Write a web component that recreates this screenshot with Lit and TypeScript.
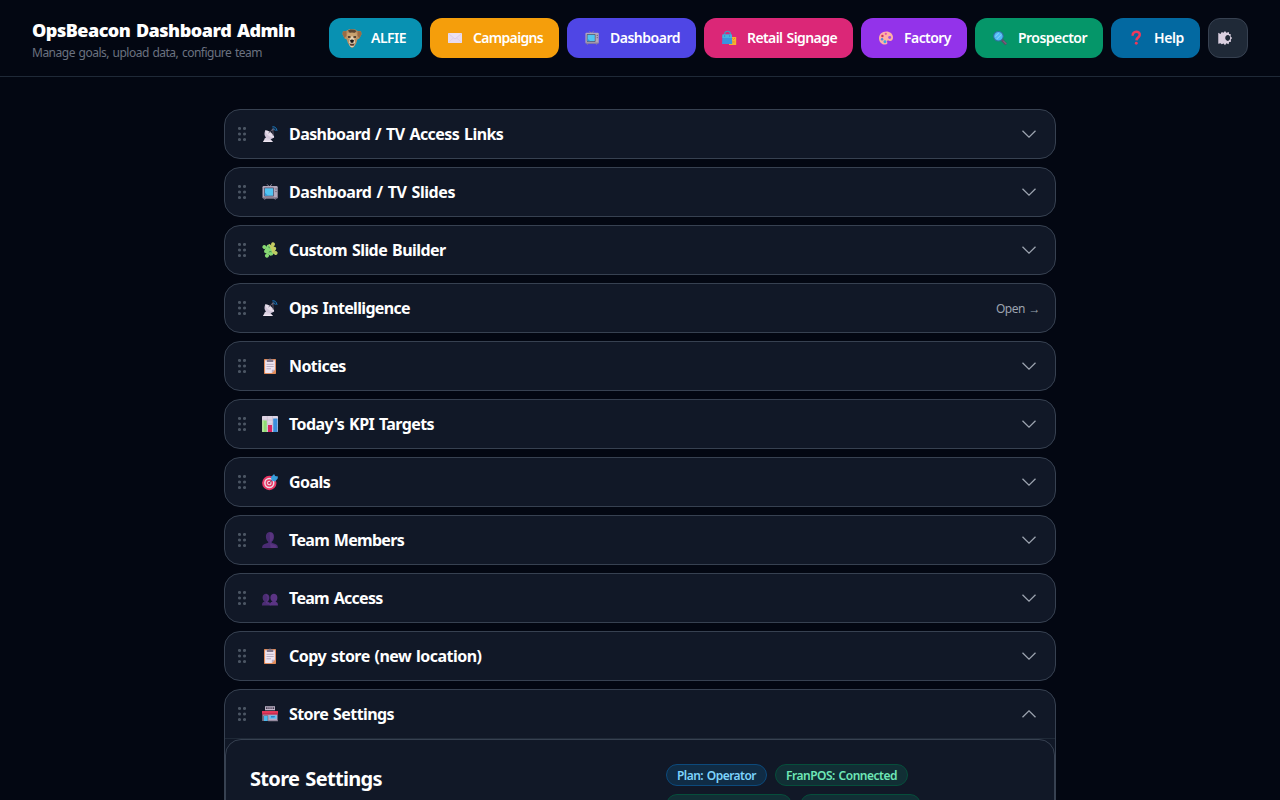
import { LitElement, html, css, svg } from "lit";
import { customElement, property, state } from "lit/decorators.js";
import { classMap } from "lit/directives/class-map.js";

const dish = svg`
  <path d="M1.200 16l1.500-3.600 3-2.400 3 3.200L10.800 16z" fill="#ddd3e3"/>
  <path d="M1.200 16l.5-1.200h8L10.800 16z" fill="#efe7f2"/>
  <path d="M3.400 4.300C1.600 8 2.600 11.300 5.600 12.600c2.400 1 5 .3 6.600-1.300z" fill="#d3c7db"/>
  <path d="M3.400 4.300C6.600 4 11.800 8 12.200 11.300 9.600 12.400 3.200 8.600 3.400 4.300z" fill="#e6ddea"/>
  <path d="M6.500 7l4.300-3.500.4 6.200" stroke="#6d6577" fill="none" stroke-width=".8"/>
  <circle cx="10.800" cy="3.500" r="1.100" fill="#6b6375"/>
  <path d="M10.300 .9q4-.7 4.700 4M11.300 2.600q1.700 0 2 2.200" stroke="#1a7ac2" fill="none" stroke-width="1"/>`;
const tv = svg`
  <path d="M5 .3l2.300 2.300L10 .3M3.500 14.300l-.9 1.400M12.500 14.300l.9 1.400" stroke="#8a8295" fill="none" stroke-width="1"/>
  <rect x=".5" y="2" width="15.200" height="12.400" rx="1.200" fill="#b3a8bb"/>
  <path d="M1 13.300h14.500v1H1z" fill="#827889"/>
  <rect x="2" y="3.500" width="10" height="9" rx=".8" fill="#5c5168"/>
  <rect x="2.800" y="4.300" width="8.400" height="7.400" fill="#52c4f2"/>
  <path d="M2.800 11.700V8.500L6 11.700z" fill="#3398d8"/>
  <circle cx="14" cy="5" r=".7" fill="#665d70"/><circle cx="14" cy="7.500" r=".7" fill="#665d70"/>`;
const clipboard = svg`
  <rect x="2" y="1" width="12" height="15" rx=".7" fill="#e18b59"/>
  <path d="M3.100 2.300h9.800v9.500l-3.100 3.200H3.100z" fill="#eee5f1"/>
  <path d="M9.800 15v-3.200h3.100z" fill="#bbaec6"/>
  <path d="M4.800 4V1.500h2q1.200-2 2.500 0h2V4z" fill="#81778b"/>
  <path d="M4.500 6.300h7.200M4.500 8.500h7.200M4.500 10.800h4.500" stroke="#b3a7bd" stroke-width=".9"/>`;
const icons: Record<string, unknown> = {
  dish,
  tv,
  clipboard,
  puzzle: svg`
    <g transform="rotate(28 8 8)">
      <path d="M3.200 3.200h9.600v9.600H3.200z" fill="#86d873"/>
      <path d="M3.200 3.200h9.600v7L7 5.500z" fill="#c5cc62"/>
      <circle cx="8" cy="1.600" r="2" fill="#c5cc62"/><circle cx="1.600" cy="8" r="2" fill="#86d873"/>
      <circle cx="8" cy="14.400" r="2" fill="#86d873"/><circle cx="14.400" cy="8" r="2" fill="#bccd65"/>
      <circle cx="2.400" cy="2.700" r="2" fill="#111827"/><circle cx="13.600" cy="2.700" r="1.300" fill="#111827"/>
      <circle cx="13.500" cy="13.400" r="1.900" fill="#111827"/><circle cx="2.600" cy="13.300" r="1.500" fill="#111827"/>
      <path d="M5.300 5.500l1.300 1.200M8 10.500q.3-1.700 2.300-1.500" stroke="#3f7d4d" stroke-width=".8" fill="none"/>
    </g>`,
  chart: svg`
    <rect x="0" y="0" width="16" height="16" rx=".8" fill="#dfd4e4"/>
    <path d="M0 4h16M0 8h16M0 12h16M5.300 0v16M10.500 0v16" stroke="#b8abc0" stroke-width=".4"/>
    <path d="M.5 4.500h4.300V16H.5z" fill="#8edb74"/><path d="M.5 4.500h1.400V16H.5z" fill="#b0e88f"/>
    <path d="M6 9h4v7H6z" fill="#dc2462"/><path d="M11.200 2.500h4.300V16h-4.300z" fill="#3b8edb"/>`,
  target: svg`
    <circle cx="7.300" cy="9" r="7.200" fill="#e93765"/><circle cx="7.300" cy="9" r="5.200" fill="#ead9e5"/>
    <circle cx="7.300" cy="9" r="3.700" fill="#e93765"/><circle cx="7.300" cy="9" r="2.300" fill="#eee0e9"/>
    <circle cx="7.300" cy="9" r="1.200" fill="#dd315e"/>
    <path d="M7.300 9l4.500-5" stroke="#53445d" stroke-width=".8"/>
    <path d="M9 3l3.100-3 1 2L16 2.500l-.4 2.300L13 7.500 9.500 6.600z" fill="#379edc"/>`,
  person: svg`
    <path d="M3.900 4.300C3.900-1.500 12.100-1.500 12.100 4.300c0 2.900-1 4.600-2.300 5.500v1l3.600 1.100c2 .7 2.500 1.900 2.500 4.100H.1c0-2.200.5-3.400 2.600-4.100l3.500-1.100v-1C4.900 8.900 3.900 7.200 3.900 4.300z" fill="#4a2c73"/>
    <path d="M7.500.5q4-.2 3.800 4.300-.3 4-2.700 4.700v2.300l4 1.200q2 .6 2.100 3H8.500z" fill="#59357f"/>`,
  people: svg`
    <g transform="translate(0 1.300)">
    <path d="M.6 6.100C.6 1.200 7.400 1.200 7.400 6.100c0 2.200-.8 3.300-1.700 4v.4c1.800.2 2.900 1.300 2.900 3.600H0c0-2.300.7-3.300 2.400-3.600v-.4C1.300 9.400.6 8.100.6 6.100z" fill="#4c2d74"/>
    <path d="M8.400 6.100c0-4.900 7-4.900 7 0 0 2.200-.7 3.300-1.700 4v.4c1.600.3 2.300 1.400 2.300 3.600H7.800c0-2.300.8-3.300 2.600-3.600v-.4C9.200 9.400 8.400 8.100 8.400 6.100z" fill="#5b3484"/>
    <path d="M4 3.500q2.300.2 2.200 3.300-.1 3-1.700 3.500v1.300q2.700 0 2.900 1.800" stroke="#5f3889" stroke-width=".9" fill="none"/>
    </g>`,
  store: svg`
    <path d="M3 .3h10v4H3z" fill="#c3b7cb"/><path d="M3.900 1.300h1.700v1.700H3.900zM6.300 1.300h1.300v1.700H6.300zM8.400 1.300h1.300v1.700H8.400zM10.500 1.300h1.700v1.700h-1.700z" fill="#4b4055"/>
    <path d="M.5 7.500h15V15H.5z" fill="#b8a8c0"/><path d="M0 5h16v3.300H0z" fill="#e33859"/>
    <path d="M0 7.500h16v1H0z" fill="#b21f46"/>
    <path d="M1.300 9.400H6.200V15H1.300z" fill="#5a5064"/><path d="M2 10H5.700V15H2z" fill="#48b8ec"/>
    <path d="M7.500 9.500h7v3.300h-7z" fill="#5cc0f3"/><path d="M9 10h4l-.6 1.500H9z" fill="#2a81c9"/>
    <path d="M6.200 14.200H16v1H6.200z" fill="#8b8095"/>`,
  dog: svg`
    <path d="M3.500 1.500L.3 2 0 4.500l1.800 3.600 1.600.6 1.200 3.300 2 3L8 16l1.600-.9 1.900-2.800 1-3.400 1.700-.8L16 4.500 15.600 2l-3.300-.5L10.400.3H5.500z" fill="#b98f62"/>
    <path d="M4.500 1.200L6.800.4l3.500.2 1.500 1.200-2.400 2H6.600z" fill="#5e4630"/>
    <path d="M3.300 1.700L.3 2.200 0 4.500l1.800 3.300L3.400 5.500zM12.700 1.700l3 .5.300 2.300-1.800 3.300-1.600-2.300z" fill="#9a6b44"/>
    <path d="M4 3.600L8 3l4 .6.200 3.600-2 1.700L8 7.100 5.800 8.900 3.800 7.200z" fill="#c9a370"/>
    <path d="M6.200 8.300L8 5.600l1.900 2.700.7 3.200-1 3.200L8 15.400l-1.700-.7-.9-3.200z" fill="#e3d0b2"/>
    <path d="M4.500 6h2.200v1.300H4.600zM9.300 6h2.200l-.1 1.300H9.300z" fill="#33251e"/>
    <path d="M6.300 9.500q1.700-1.300 3.400 0L9 11.500H7z" fill="#191719"/>
    <path d="M5.700 12q2.300.9 4.600 0l-.9 2.200H6.800z" fill="#5c3c2f"/>`,
  envelope: svg`
    <rect x="0" y="2.300" width="16" height="11.400" rx=".7" fill="#e8dcef"/>
    <path d="M.6 12.900l6-5.300M15.400 12.900l-6-5.300" stroke="#dccbe4" stroke-width=".8"/>
    <path d="M.5 2.800l7.500 6.400 7.500-6.400" stroke="#d3c0dd" stroke-width=".7" fill="#ebe1f1"/>`,
  bags: svg`
    <path d="M3.200 5V2.600C3.400-.5 9.300-.5 9.500 2.600V5" stroke="#3aa0c8" fill="none" stroke-width="1.300"/>
    <path d="M8.500 6.800h7.700V16H8z" fill="#f6b12f"/><path d="M11.800 8.300q1.300 3 3-.3M12 12.500h2.600" stroke="#d98a1e" stroke-width=".9" fill="none"/>
    <path d="M.6 3.900h10.600l.5 11H0z" fill="#3b93e0"/><path d="M.6 3.900h10.600l.2 4H.4z" fill="#45b4e0"/>
    <path d="M2.600 5.700h1M8.300 5.700h1" stroke="#1f6d9a" stroke-width="1"/>`,
  palette: svg`
    <path d="M8.500.5C3 .5 0 4 0 8.200s3 7.300 7 7.300c2.600 0 3-1.500 2.300-2.900-.6-1.500.8-2 2.200-1.500 2.500 1 4.500-.7 4.500-3.800C16 3 12.500.5 8.500.5z" fill="#ffb1a5"/>
    <circle cx="12.200" cy="7.500" r="1.700" fill="#a64ee4"/><circle cx="7.800" cy="3.200" r="1.300" fill="#e34cae"/>
    <circle cx="3.900" cy="5.600" r="1.400" fill="#ca345f"/><circle cx="3.500" cy="9.500" r="1.400" fill="#518ae1"/><circle cx="6.800" cy="12.400" r="1.700" fill="#3aaae4"/>`,
  glass: svg`
    <path d="M10 10l5 5.200" stroke="#5d4a66" stroke-width="3"/><path d="M11.500 11l3.700 3.800" stroke="#8b7491" stroke-width="1"/>
    <circle cx="6.200" cy="6" r="5.500" fill="#4fb9f5" stroke="#2f6f9c" stroke-width="1.200"/>
    <path d="M2.600 6.500l4-4M4.300 9.300L9.600 4" stroke="#7dd0fa" stroke-width="1.200"/>`,
  question: svg`
    <path d="M4.300 5.500C3.300-.3 12.900-.6 12.300 4.500c-.3 3-3.700 3-3.800 6.200" stroke="#ee385b" stroke-width="2.900" fill="none"/>
    <circle cx="8.300" cy="14" r="1.700" fill="#ee385b"/>`,
  gear: svg`
    <path fill-rule="evenodd" d="M.3 2l2.500 1.400L4.300 1l2 1L8 0l1.500 2 2.800-1 .4 2.300 2 .5-.4 2.400L16.200 8l-1.600 1.800.3 2.500-2.200.4-.6 2.300-2.500-1L8 16.200l-1.600-2-2.200.8-1.200-1L.3 14.600zM11.300 4.700c-4 0-4 6.600 0 6.600 3.500 0 3.500-6.600 0-6.600z" fill="#d9cfdf"/>`,
};

@customElement("emoji-icon")
class EmojiIcon extends LitElement {
  static styles = css`
    :host { display: block; width: 16px; height: 16px; flex: none; }
    svg { display: block; width: 100%; height: 100%; overflow: visible; }
  `;
  @property() name = "";
  render() {
    return html`<svg viewBox="0 0 16 16" aria-hidden="true">${icons[this.name]}</svg>`;
  }
}

/* One line of text, tracked so that it fills the given measure. */
@customElement("fit-text")
class FitText extends LitElement {
  static styles = css`
    :host { display: block; flex: none; }
    .line { display: inline-block; white-space: pre; vertical-align: top; word-spacing: 0.08em; }
  `;
  @property() text = "";
  @property({ type: Number }) measure = 0;
  render() {
    return html`<span class="line">${this.text}</span>`;
  }
  updated() {
    const line = this.renderRoot.querySelector(".line") as HTMLElement;
    line.style.letterSpacing = "0px";
    const natural = line.getBoundingClientRect().width;
    line.style.letterSpacing = `${(this.measure - natural) / this.text.length}px`;
    this.style.width = `${this.measure}px`;
  }
}

const links = [
  { label: "ALFIE", icon: "dog", w: 35, tone: "cyan" },
  { label: "Campaigns", icon: "envelope", w: 70, tone: "amber" },
  { label: "Dashboard", icon: "tv", w: 70, tone: "indigo" },
  { label: "Retail Signage", icon: "bags", w: 90, tone: "pink" },
  { label: "Factory", icon: "palette", w: 47, tone: "purple" },
  { label: "Prospector", icon: "glass", w: 69, tone: "green" },
  { label: "Help", icon: "question", w: 30, tone: "sky" },
];

const sections = [
  { label: "Dashboard / TV Access Links", icon: "dish", w: 214.3 },
  { label: "Dashboard / TV Slides", icon: "tv", w: 166 },
  { label: "Custom Slide Builder", icon: "puzzle", w: 156.7 },
  { label: "Ops Intelligence", icon: "dish", w: 121 },
  { label: "Notices", icon: "clipboard", w: 56.6 },
  { label: "Today's KPI Targets", icon: "chart", w: 145 },
  { label: "Goals", icon: "target", w: 41.3 },
  { label: "Team Members", icon: "person", w: 115 },
  { label: "Team Access", icon: "people", w: 93.5 },
  { label: "Copy store (new location)", icon: "clipboard", w: 192.5 },
  { label: "Store Settings", icon: "store", w: 105 },
];
const linkIndex = 3;

@customElement("app-root")
class AppRoot extends LitElement {
  static styles = css`
    * { box-sizing: border-box; }
    :host {
      display: block; height: 100vh; overflow: hidden; background: #030712; color: #fff;
      font-family: "Noto Sans", "Open Sans", sans-serif;
    }
    .top {
      display: flex; align-items: center; justify-content: space-between;
      height: 77px; padding: 0 32px; border-bottom: 1px solid #1f2937;
    }
    .brand { display: flex; flex-direction: column; padding-top: 3px; }
    .name { font-family: "Open Sans", sans-serif; font-size: 18px; line-height: 24px; font-weight: 800; }
    .sub { font-size: 12px; line-height: 16px; padding-top: 3px; color: #6b7280; }
    .nav { display: flex; gap: 8px; }
    .btn {
      display: flex; align-items: center; gap: 8px; height: 40px; padding: 0 16px;
      border-radius: 12px; font-size: 14px; line-height: 20px; font-weight: 600;
    }
    .slot { display: flex; width: 19px; padding-left: 2px; }
    .slot emoji-icon { width: 14px; height: 14px; }
    .cyan { background: #0891b2; padding-left: 12px; }
    .cyan .slot { width: 22px; padding-left: 0; }
    .cyan emoji-icon { width: 22px; height: 19px; }
    .amber { background: #f59e0b; }
    .indigo { background: #4f46e5; }
    .pink { background: #db2777; }
    .purple { background: #9333ea; }
    .green { background: #059669; }
    .sky { background: #0369a1; }
    .square { width: 40px; padding: 0 0 0 9px; background: #1f2937; border: 1px solid #374151; }
    .square emoji-icon { width: 14px; height: 14px; }
    .list { display: flex; flex-direction: column; gap: 8px; width: 832px; margin: 32px auto 0; }
    .card { background: #111827; border: 1px solid #374151; border-radius: 16px; overflow: hidden; flex: none; }
    .head { display: flex; align-items: center; height: 48px; padding: 0 15px 0 13px; }
    .grip { width: 8px; height: 14px; display: block; margin-right: 16px; fill: #4b5563; }
    .title { font-size: 16px; line-height: 24px; font-weight: 700; margin-left: 11px; }
    .end { margin-left: auto; display: flex; }
    .chev { display: block; width: 14px; height: 8px; margin-right: 4px; fill: none; stroke: #9ca3af; stroke-width: 1.3; }
    .flip { transform: rotate(180deg); }
    .open { font-size: 12px; line-height: 16px; color: #9ca3af; padding-top: 1px; }
    .expanded .head { height: 49px; border-bottom: 1px solid #1f2937; }
    .panel {
      display: flex; height: 300px; padding: 24px; border: 1px solid #374151; border-radius: 16px;
    }
    .heading { font-size: 20px; line-height: 28px; font-weight: 700; width: 416px; flex: none; padding-top: 1px; }
    .pills { display: flex; flex-wrap: wrap; gap: 8px; align-content: flex-start; }
    .pill {
      display: flex; align-items: center; height: 22px; padding: 1px 10px 0; border-radius: 11px;
      border: 1px solid #064e3b; background: #112f35; color: #6ee7b7; font-size: 12px; line-height: 16px; font-weight: 600;
    }
    .blue { border-color: #0c4a7c; background: #102c45; color: #7dd3fc; }
    .long { width: 126px; }
    .mid { width: 121px; }
  `;

  @state() private expanded = 10;

  private section(s: (typeof sections)[number], i: number) {
    const open = i === this.expanded;
    const link = i === linkIndex;
    return html`
      <section class=${classMap({ card: true, expanded: open })}>
        <div class="head" @click=${() => { if (!link) this.expanded = open ? -1 : i; }}>
          <svg class="grip" viewBox="0 0 8 14">
            ${[1.5, 7, 12.5].map((y) => svg`<circle cx="1.500" cy=${y} r="1.550"/><circle cx="6.500" cy=${y} r="1.550"/>`)}
          </svg>
          <emoji-icon name=${s.icon}></emoji-icon>
          <fit-text class="title" .text=${s.label} .measure=${s.w}></fit-text>
          <div class="end">
            ${link
              ? html`<fit-text class="open" .text=${"Open →"} .measure=${44}></fit-text>`
              : html`<svg class=${classMap({ chev: true, flip: open })} viewBox="0 0 14 8"><path d="M.5.7L7 7.100 13.500.7"/></svg>`}
          </div>
        </div>
        ${open
          ? html`<div class="panel">
              <div class="heading"><fit-text .text=${"Store Settings"} .measure=${131.8}></fit-text></div>
              <div class="pills">
                <span class="pill blue"><fit-text .text=${"Plan: Operator"} .measure=${79}></fit-text></span>
                <span class="pill"><fit-text .text=${"FranPOS: Connected"} .measure=${111}></fit-text></span>
                <span class="pill long"></span>
                <span class="pill mid"></span>
              </div>
            </div>`
          : ""}
      </section>`;
  }

  render() {
    return html`
      <header class="top">
        <div class="brand">
          <fit-text class="name" .text=${"OpsBeacon Dashboard Admin"} .measure=${263}></fit-text>
          <fit-text class="sub" .text=${"Manage goals, upload data, configure team"} .measure=${230}></fit-text>
        </div>
        <nav class="nav">
          ${links.map(
            (l) => html`<div class="btn ${l.tone}">
              <span class="slot"><emoji-icon name=${l.icon}></emoji-icon></span>
              <fit-text .text=${l.label} .measure=${l.w}></fit-text>
            </div>`,
          )}
          <div class="btn square"><emoji-icon name="gear"></emoji-icon></div>
        </nav>
      </header>
      <main class="list">${sections.map((s, i) => this.section(s, i))}</main>
    `;
  }
}
